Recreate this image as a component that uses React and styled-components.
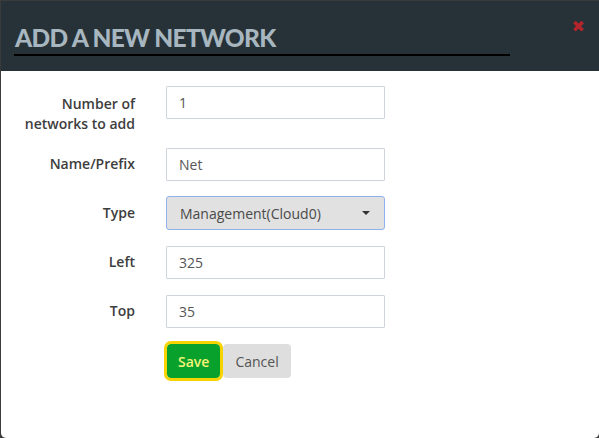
import React, { useState } from 'react';
import styled, { createGlobalStyle } from 'styled-components';

const GlobalStyle = createGlobalStyle`
  html, body {
    margin: 0;
    padding: 0;
    background: #3b3b3b;
    font-family: "Open Sans", "Noto Sans", sans-serif;
  }
`;

const Dialog = styled.div`
  width: 598px;
  height: 437px;
  margin: 1px 0 0 1px;
  background: #fff;
  border-radius: 0 0 5px 5px;
  overflow: hidden;
  box-sizing: border-box;
`;

const Header = styled.div`
  height: 70px;
  background: #263238;
  display: flex;
  align-items: flex-start;
  padding: 0 14px 0 13px;
  box-sizing: border-box;
`;

const Title = styled.h1`
  margin: 20px 0 0;
  width: 496px;
  font-family: "Lato", "Noto Sans", sans-serif;
  font-weight: 900;
  font-size: 24.5px;
  line-height: 33px;
  letter-spacing: -0.7px;
  color: #a7b6bf;
  border-bottom: 2px solid #000;
  padding-left: 1px;
  box-sizing: border-box;
`;

const Close = styled.button`
  margin: 17px 0 0 auto;
  border: none;
  background: none;
  padding: 0;
  color: #b3242b;
  font-family: "DejaVu Sans", sans-serif;
  font-weight: 700;
  font-size: 16px;
  line-height: 18px;
  cursor: pointer;
`;

const Form = styled.form`
  display: flex;
  flex-direction: column;
  gap: 16px;
  padding-top: 15px;
`;

const Row = styled.div`
  display: grid;
  grid-template-columns: 134px 219px;
  column-gap: 31px;
  align-items: start;
`;

const Label = styled.label`
  text-align: right;
  font-size: 14px;
  font-weight: 600;
  line-height: 20px;
  color: #3d3d3d;
  padding-top: ${(p) => (p.$multi ? '8px' : '6px')};
  margin-bottom: ${(p) => (p.$multi ? '-2px' : '0')};
`;

const Input = styled.input`
  height: 33px;
  box-sizing: border-box;
  border: 1px solid #cfd4dc;
  border-radius: 1px;
  padding: 0 12px;
  font-family: inherit;
  font-size: 14px;
  color: #555;
  background: #fff;
  outline: none;
`;

const Select = styled.div`
  height: 34px;
  box-sizing: border-box;
  border: 1px solid #8fb1f0;
  border-radius: 3px;
  background: #e1e1e1;
  display: flex;
  align-items: center;
  justify-content: space-between;
  padding: 0 12px 0 13px;
  font-size: 14px;
  color: #4a4a4a;
  margin-top: -1px;
`;

const Caret = styled.span`
  width: 0;
  height: 0;
  border-left: 4px solid transparent;
  border-right: 4px solid transparent;
  border-top: 4px solid #333;
  margin-right: 2px;
`;

const Buttons = styled.div`
  display: flex;
  gap: 3px;
  padding-left: 166px;
`;

const Button = styled.button`
  height: 34px;
  padding: 0 ${(p) => (p.$primary ? '11px' : '12px')};
  border-radius: 4px;
  border: none;
  font-family: inherit;
  font-size: 14px;
  cursor: pointer;
  background: ${(p) => (p.$primary ? '#07a12b' : '#dedede')};
  color: ${(p) => (p.$primary ? '#f4f47a' : '#555')};
  font-weight: ${(p) => (p.$primary ? 600 : 400)};
  outline: ${(p) => (p.$primary ? '3px solid #f5d400' : 'none')};
  outline-offset: 0;
`;

export default function App() {
  const [count, setCount] = useState('1');
  const [name, setName] = useState('Net');
  const [left, setLeft] = useState('325');
  const [top, setTop] = useState('35');

  return (
    <>
      <GlobalStyle />
      <Dialog>
        <Header>
          <Title>ADD A NEW NETWORK</Title>
          <Close type="button">✖</Close>
        </Header>
        <Form onSubmit={(e) => e.preventDefault()}>
          <Row>
            <Label $multi>
              Number of
              <br />
              networks to add
            </Label>
            <Input value={count} onChange={(e) => setCount(e.target.value)} />
          </Row>
          <Row>
            <Label>Name/Prefix</Label>
            <Input value={name} onChange={(e) => setName(e.target.value)} />
          </Row>
          <Row>
            <Label>Type</Label>
            <Select>
              <span>Management(Cloud0)</span>
              <Caret />
            </Select>
          </Row>
          <Row>
            <Label>Left</Label>
            <Input value={left} onChange={(e) => setLeft(e.target.value)} />
          </Row>
          <Row>
            <Label>Top</Label>
            <Input value={top} onChange={(e) => setTop(e.target.value)} />
          </Row>
          <Buttons>
            <Button $primary type="submit">Save</Button>
            <Button type="button">Cancel</Button>
          </Buttons>
        </Form>
      </Dialog>
    </>
  );
}
